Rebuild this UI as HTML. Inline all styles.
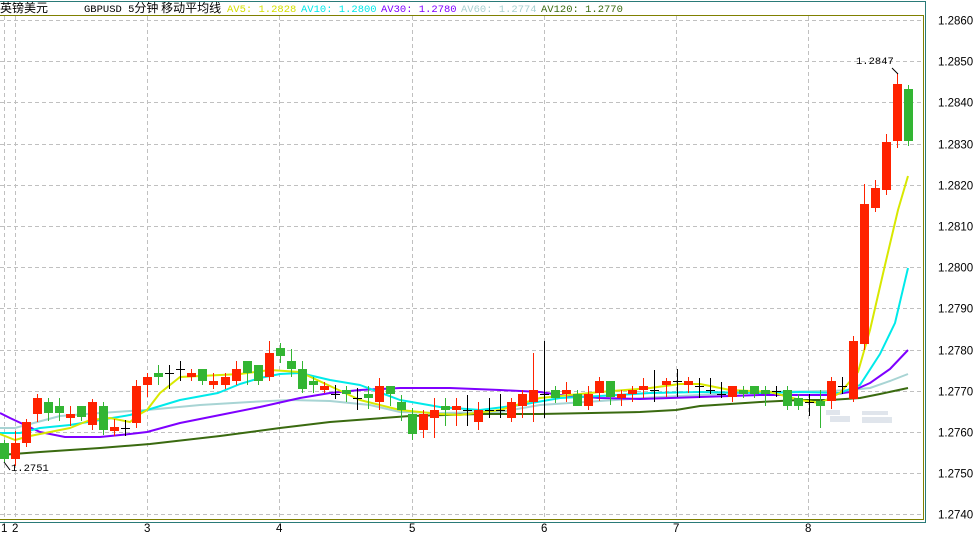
<!DOCTYPE html>
<html><head><meta charset="utf-8"><style>
html,body{margin:0;padding:0;background:#fff;width:976px;height:535px;overflow:hidden}
svg{display:block}
text{font-family:"Liberation Mono","Noto Sans CJK SC",monospace;font-size:10.5px}
.ax{font-family:"Liberation Sans","Noto Sans CJK SC",sans-serif;font-size:11.5px;fill:#000}
</style></head><body>
<svg id="s" width="976" height="535" xmlns="http://www.w3.org/2000/svg">
<rect width="976" height="535" fill="#fff"/>
<g id="grid" stroke="#c0c0c0" stroke-width="1" stroke-dasharray="4,3" fill="none"></g>
<g id="lines" fill="none" stroke-linejoin="round"></g>
<g id="cand"></g>
<g fill="#dde3ea" opacity="0.9">
<rect x="826" y="410" width="14" height="5"/><rect x="830" y="416" width="20" height="6"/>
<rect x="862" y="411" width="26" height="4"/><rect x="862" y="417" width="30" height="6"/>
</g>
<line x1="0" y1="1.5" x2="926" y2="1.5" stroke="#2a7a78" stroke-width="1"/>
<line x1="0" y1="15.5" x2="923" y2="15.5" stroke="#808000" stroke-width="1"/>
<line x1="923.5" y1="15" x2="923.5" y2="520" stroke="#808000" stroke-width="1"/>
<line x1="0" y1="519.5" x2="924" y2="519.5" stroke="#808000" stroke-width="1"/>
<line x1="925.5" y1="1" x2="925.5" y2="523" stroke="#2a7a78" stroke-width="1"/>
<line x1="0" y1="522.5" x2="926" y2="522.5" stroke="#2a7a78" stroke-width="1"/>
<text x="0" y="12" font-size="12" style="font-family:'Noto Sans CJK SC',sans-serif;font-size:12px">英镑美元</text>
<text x="84" y="12" fill="#000">GBPUSD 5<tspan style="font-family:'Noto Sans CJK SC',sans-serif;font-size:12px">分钟 移动平均线</tspan></text>
<text x="227" y="12" fill="#d4e000">AV5: 1.2828</text>
<text x="301" y="12" fill="#00e8e8">AV10: 1.2800</text>
<text x="381" y="12" fill="#7f00ff">AV30: 1.2780</text>
<text x="461" y="12" fill="#a8d0d0">AV60: 1.2774</text>
<text x="541" y="12" fill="#3a6a10">AV120: 1.2770</text>
<text x="856" y="64" fill="#000">1.2847</text>
<line x1="892" y1="68" x2="898" y2="74" stroke="#000"/>
<text x="11" y="471" fill="#000">1.2751</text>
<line x1="4" y1="462" x2="10" y2="470" stroke="#000"/>
<g id="ax"></g>
</svg>
<script>
var N="http://www.w3.org/2000/svg";
function el(p,t,a,txt){var e=document.createElementNS(N,t);for(var k in a)e.setAttribute(k,a[k]);if(txt)e.textContent=txt;document.getElementById(p).appendChild(e);return e;}
function Y(p){return 20+(1.2860-p)*41200;}
for(var i=0;i<13;i++){var y=Math.round(Y(1.2860-i*0.001))+0.5;el('grid','line',{x1:0,y1:y,x2:922,y2:y});
el('ax','text',{x:938,y:y+4,'class':'ax'},(1.2860-i*0.001).toFixed(4));}
[4,15,147,279,412,544,676,808].forEach(function(x){el('grid','line',{x1:x+0.5,y1:16,x2:x+0.5,y2:519});});
[[1,'1'],[12,'2'],[144,'3'],[276,'4'],[409,'5'],[541,'6'],[673,'7'],[805,'8']].forEach(function(a){el('ax','text',{x:a[0],y:532,'class':'ax'},a[1]);});
function pl(c,w,pts){el('lines','polyline',{stroke:c,'stroke-width':w,points:pts});}
pl('#a8d4d4',2,'0,428 15,428 30,424 60,416 100,413 130,411 147,410 200,405 250,402 290,400 330,401 370,405 400,412 440,413 500,412 540,405 600,401 660,397 700,395 760,392 830,391 850,390 870,388 890,381 908,374');
pl('#3a6a10',2,'0,455 40,452 100,448 150,444 220,436 280,428 330,422 410,416 480,414 540,414 640,412 676,410 700,406 760,402 800,400 830,400 860,398 880,394 908,388');
pl('#7f00ff',2,'0,413 10,418 25,425 40,432 65,437 100,437 130,434 147,432 180,423 220,415 260,407 300,398 330,393 360,390 400,388 450,388 500,390 540,392 560,395 600,398 640,399 700,397 760,395 830,395 850,392 870,383 890,369 908,350');
pl('#00eaea',2,'0,433 20,433 40,428 70,425 100,420 130,415 147,410 180,400 218,393 240,384 260,378 280,374 300,373 330,380 360,385 400,400 440,407 480,410 520,405 560,398 600,396 650,393 700,392 760,393 800,392 840,393 860,385 880,354 895,323 908,268');
pl('#d8e800',2,'0,434 15,440 30,436 50,432 70,428 90,420 110,418 130,422 140,414 147,410 160,393 180,377 200,376 240,374 270,370 300,372 330,386 360,400 400,410 440,414 460,415 500,410 540,398 560,396 600,392 650,388 680,384 700,384 730,390 770,392 800,400 820,403 840,393 858,372 870,330 885,265 898,210 908,176');
var C=[['G',443,459,440,462],['R',443,459,431,466],['R',422,443,419,447],['R',398,414,394,422],['G',402,413,398,421],['G',406,413,398,421],['R',414,418,406,426],['G',406,417,406,421],['R',402,425,399,430],['G',406,430,402,435],['R',427,431,419,436],['C',428,428,420,436],
['R',386,423,380,428],['R',377,385,373,397],['G',373,377,365,385],['C',373,373,365,389],['C',369,369,361,381],['R',373,377,369,381],['G',369,381,369,385],['R',381,385,373,389],['R',377,385,373,389],['R',369,381,361,385],['G',361,373,361,385],['G',365,381,365,385],['R',353,377,341,381],['G',348,356,343,363],['G',361,369,349,377],['G',369,389,361,393],
['G',381,385,377,393],['R',386,390,382,393],['C',394,394,385,399],['G',390,394,386,402],['C',398,398,388,410],['G',394,398,386,409],['R',386,402,378,410],['G',386,394,386,406],['G',402,410,395,421],['G',414,434,408,440],['R',414,430,410,438],['R',410,418,398,438],['G',406,410,398,426],['R',406,410,398,426],['C',410,410,395,426],['R',410,422,402,430],['C',410,410,398,418],['C',410,410,394,418],['R',402,418,398,422],['R',394,406,390,418],['R',390,402,353,422],['C',394,394,341,418],
['G',390,398,386,403],['R',390,394,382,402],['G',394,406,390,406],['R',394,406,386,410],['R',381,393,377,401],['G',381,397,381,405],['R',394,398,390,406],['R',390,394,386,402],['R',386,390,378,398],['C',390,390,370,402],['R',381,385,378,397],['C',381,381,369,397],['R',381,385,377,393],['C',386,386,378,398],['C',390,390,378,394],['C',394,394,382,398],['R',386,397,386,402],['G',390,394,386,398],['G',386,394,386,398],['G',390,394,386,406],
['C',391,391,386,397],['G',390,406,386,410],['G',398,406,394,410],['C',402,402,394,416],['G',401,406,390,428],['R',381,401,377,409],['C',386,386,377,394],['R',341,399,336,402],['R',204,344,184,350],['R',188,208,180,212],['R',142,190,134,195],['R',84,141,73,148],['G',89,141,85,146]];
C.forEach(function(c,i){var x=Math.round(i*11.025),col=c[0]=='R'?'#ff2200':c[0]=='G'?'#33b533':'#000';
el('cand','rect',{x:x+4,y:c[3],width:1,height:c[4]-c[3],fill:col});
if(c[0]=='C')el('cand','rect',{x:x,y:c[1],width:9,height:1,fill:col});
else el('cand','rect',{x:x,y:c[1],width:9,height:Math.max(1,c[2]-c[1]),fill:col});});
</script>
</body></html>
